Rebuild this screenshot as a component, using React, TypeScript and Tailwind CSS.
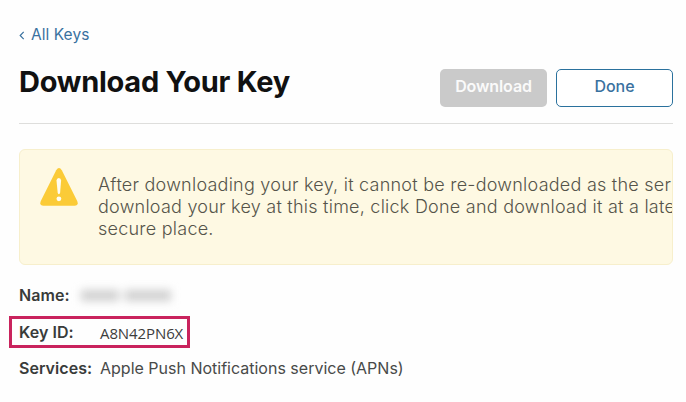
import React from "react";
import clsx from "clsx";

function WarningIcon() {
  return (
    <svg className="mt-[17px] ml-5 h-10 w-10 shrink-0" viewBox="0 0 40 40">
      <path
        d="M16.2 3.2Q19 -1 21.8 3.2L37.2 34Q39 38.4 34.6 38.8H3.4Q-1 38.4 .8 34Z"
        fill="#fbcb37"
      />
      <path
        d="M16.5 13.6Q16.7 11 18.8 11Q21 11 21.1 13.6L20.1 25.8Q19.8 27.2 18.9 27.2Q17.9 27.2 17.7 25.8Z"
        fill="#fffdf0"
      />
      <circle cx="18.9" cy="31.8" r="2.4" fill="#fffdf0" />
    </svg>
  );
}

function DetailRow({
  label,
  highlighted,
  children,
}: {
  label: string;
  highlighted?: boolean;
  children: React.ReactNode;
}) {
  return (
    <div
      className={clsx(
        "flex items-center",
        highlighted
          ? "-ml-[10px] h-8 w-[181px] border-[3px] border-[#c9235d] pl-[7px]"
          : "h-6"
      )}
    >
      <span className="w-[81px] shrink-0 text-[16px] font-semibold tracking-[0.05px] whitespace-nowrap text-[#393b3a]">
        {label}
      </span>
      {children}
    </div>
  );
}

export default function App() {
  return (
    <div className="h-[402px] w-[686px] overflow-hidden bg-[#fefefe] pt-[22px] pr-[13px] pl-[19px] font-['Inter',sans-serif]">
      <a
        href="#"
        className="flex h-6 items-center gap-[6px] text-[15.5px] text-[#39719f]"
      >
        <svg className="mt-[3px] h-[9px] w-[6px]" viewBox="0 0 6 9">
          <path d="M4.7 .8L1.2 4.5L4.7 8.2" fill="none" stroke="currentColor" strokeWidth="1.2" />
        </svg>
        <span className="mt-[2px] tracking-[0.05px]">All Keys</span>
      </a>

      <header className="flex h-[78px] items-start justify-between border-b border-[#dededc]">
        <h1 className="mt-[17px] text-[29px] leading-[38px] font-bold tracking-[-0.27px] whitespace-nowrap text-[#111]">
          Download Your Key
        </h1>
        <div className="mt-[23px] flex gap-[9px] text-[16px]">
          <button
            disabled
            className="h-[38px] w-[107px] rounded-[5px] bg-[#cacaca] pb-1 font-semibold tracking-[-0.1px] text-[#fafafa]"
          >
            Download
          </button>
          <button className="h-[38px] w-[117px] rounded-[5px] border border-[#2a719d] bg-white pb-[4px] font-medium text-[#39719f]">
            Done
          </button>
        </div>
      </header>

      <section className="mt-[25px] flex h-[116px] overflow-hidden rounded-[6px] border border-[#f7efcc] bg-[#fef9e3]">
        <WarningIcon />
        <p className="mt-[24px] ml-[18px] text-[18px] leading-[22px] font-light tracking-[0.24px] whitespace-nowrap text-[#55544a]">
          After downloading your key, it cannot be re-downloaded as the ser
          <br />
          download your key at this time, click Done and download it at a late
          <br />
          secure place.
        </p>
      </section>

      <div className="mt-[18px]">
        <DetailRow label="Name:">
          <span className="ml-[-19px] flex gap-[6px] blur-[4px]">
            <span className="h-[11px] w-[38px] bg-[#d0d0d0]" />
            <span className="h-[11px] w-[46px] bg-[#d0d0d0]" />
          </span>
        </DetailRow>
        <div className="h-[9px]" />
        <DetailRow label="Key ID:" highlighted>
          <span className="mt-[3px] font-['Open_Sans',sans-serif] text-[15px] tracking-[-0.1px] text-[#3c3c3c]">
            A8N42PN6X
          </span>
        </DetailRow>
        <div className="h-[8px]" />
        <DetailRow label="Services:">
          <span className="text-[16px] whitespace-nowrap text-[#484a49]">
            Apple Push Notifications service (APNs)
          </span>
        </DetailRow>
      </div>
    </div>
  );
}
